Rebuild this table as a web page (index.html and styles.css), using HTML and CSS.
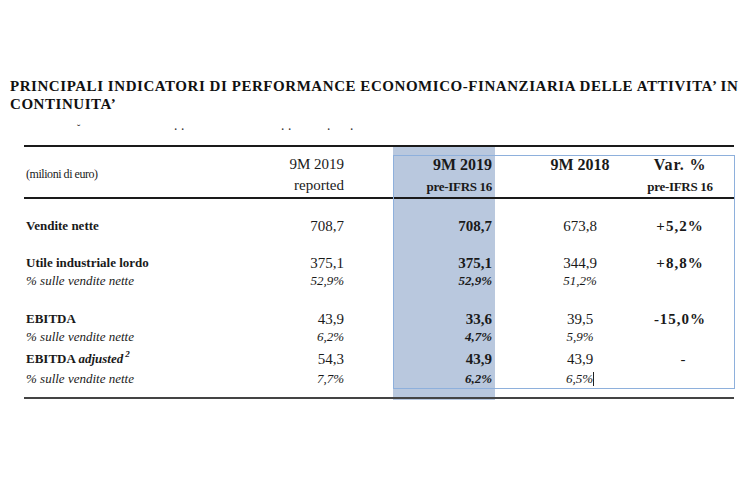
FILE: index.html
```html
<!DOCTYPE html>
<html lang="it">
<head>
<meta charset="utf-8">
<title>Principali indicatori</title>
<link rel="stylesheet" href="styles.css">
</head>
<body>
<div class="page">
  <h1 class="title">PRINCIPALI INDICATORI DI PERFORMANCE ECONOMICO-FINANZIARIA DELLE ATTIVITA’ IN<br>CONTINUITA’</h1>
  <div class="marks"><span class="m m1">˘</span><span class="m m2">·</span><span class="m m3">·</span><span class="m m4">·</span><span class="m m5">·</span><span class="m m6">·</span><span class="m m7">·</span></div>
  <div class="tablewrap">
    <table class="kpi">
      <colgroup>
        <col class="c-label"><col class="c-rep"><col class="c-sp"><col class="c-pre"><col class="c-prev"><col class="c-var">
      </colgroup>
      <thead>
        <tr>
          <th class="label unit">(milioni di euro)</th>
          <th class="rep">9M 2019<br>reported</th>
          <th class="sp"></th>
          <th class="pre"><span class="h1b">9M 2019</span><br><span class="h2b">pre-IFRS 16</span></th>
          <th class="prev"><span class="h1b">9M 2018</span></th>
          <th class="var"><span class="h1b wide">Var. %</span><br><span class="h2b">pre-IFRS 16</span></th>
        </tr>
      </thead>
      <tbody>
        <tr class="g-vendite">
          <td class="label">Vendite nette</td><td class="rep">708,7</td><td class="sp"></td><td class="pre">708,7</td><td class="prev">673,8</td><td class="var">+5,2%</td>
        </tr>
        <tr class="g-utile">
          <td class="label">Utile industriale lordo</td><td class="rep">375,1</td><td class="sp"></td><td class="pre">375,1</td><td class="prev">344,9</td><td class="var">+8,8%</td>
        </tr>
        <tr class="pct">
          <td class="label">% sulle vendite nette</td><td class="rep">52,9%</td><td class="sp"></td><td class="pre">52,9%</td><td class="prev">51,2%</td><td class="var"></td>
        </tr>
        <tr class="g-ebitda">
          <td class="label">EBITDA</td><td class="rep">43,9</td><td class="sp"></td><td class="pre">33,6</td><td class="prev">39,5</td><td class="var">-15,0%</td>
        </tr>
        <tr class="pct">
          <td class="label">% sulle vendite nette</td><td class="rep">6,2%</td><td class="sp"></td><td class="pre">4,7%</td><td class="prev">5,9%</td><td class="var"></td>
        </tr>
        <tr class="g-adj">
          <td class="label">EBITDA <i class="adj">adjusted</i><sup class="note">2</sup></td><td class="rep">54,3</td><td class="sp"></td><td class="pre">43,9</td><td class="prev">43,9</td><td class="var dash">-</td>
        </tr>
        <tr class="pct last">
          <td class="label">% sulle vendite nette</td><td class="rep">7,7%</td><td class="sp"></td><td class="pre">6,2%</td><td class="prev">6,5%<span class="caret"></span></td><td class="var"></td>
        </tr>
        <tr class="tail">
          <td></td><td></td><td></td><td class="pre"></td><td></td><td></td>
        </tr>
      </tbody>
    </table>
    <div class="hl-box"></div>
  </div>
</div>
</body>
</html>
```

FILE: styles.css
```css
html, body {
  margin: 0;
  padding: 0;
  background: #ffffff;
}

body {
  font-family: "Liberation Serif", "Times New Roman", serif;
  color: #1a1a1a;
  width: 750px;
  height: 500px;
  overflow: hidden;
}

.page {
  padding-top: 77px;
}

.title {
  margin: 0 0 0 10px;
  font-size: 15px;
  line-height: 18px;
  font-weight: bold;
  letter-spacing: 0.55px;
  white-space: nowrap;
  color: #111;
}

.marks {
  height: 10px;
  margin-top: 12px;
  position: relative;
  font-size: 10px;
  line-height: 10px;
  color: #333;
}

.m {
  position: absolute;
  top: 0;
  font-weight: bold;
}
.m1 { left: 77px; top: -1px; }
.m2 { left: 174px; }
.m3 { left: 181px; }
.m4 { left: 281px; }
.m5 { left: 288px; }
.m6 { left: 327px; }
.m7 { left: 350px; }

.tablewrap {
  position: relative;
  margin: 10px 0 0 24px;
  width: 710px;
}

.kpi {
  width: 710px;
  table-layout: fixed;
  border-collapse: separate;
  border-spacing: 0;
  border-top: 2px solid #1a1a1a;
}

.c-label { width: 246px; }
.c-rep { width: 80px; }
.c-sp { width: 43px; }
.c-pre { width: 102px; }
.c-prev { width: 135px; }
.c-var { width: 104px; }

.kpi th, .kpi td {
  padding: 0;
  white-space: nowrap;
  font-weight: normal;
}

.kpi thead th {
  height: 50px;
  box-sizing: border-box;
  padding-top: 7px;
  vertical-align: top;
  line-height: 21px;
  font-size: 15px;
  border-bottom: 2px solid #1a1a1a;
}

.kpi thead th.unit {
  vertical-align: middle;
  padding-top: 4px;
  font-size: 12px;
  letter-spacing: -0.45px;
  text-align: left;
  padding-left: 2px;
}

.h1b {
  font-weight: bold;
  font-size: 16px;
}
.h1b.wide { letter-spacing: 0.8px; }
.h2b {
  font-weight: bold;
  font-size: 13px;
  letter-spacing: -0.3px;
}

.kpi td {
  line-height: 18px;
  font-size: 15px;
  vertical-align: bottom;
}

.kpi .label {
  text-align: left;
  padding-left: 2px;
}

.kpi .rep {
  text-align: right;
  padding-right: 6px;
}

.kpi .pre {
  text-align: right;
  padding-right: 3px;
  background: #b9c8de;
  font-weight: bold;
}

.kpi .prev {
  text-align: center;
  padding-left: 35px;
}

.kpi .var {
  text-align: center;
  padding-right: 4px;
  font-weight: bold;
  letter-spacing: 1px;
}
.kpi .var.dash {
  font-weight: normal;
  letter-spacing: 0;
  padding-left: 6px;
}

.kpi td.label {
  font-size: 13px;
  font-weight: bold;
}

.adj { font-weight: bold; }
.note {
  font-size: 9px;
  line-height: 0;
  vertical-align: 6px;
  font-style: italic;
  margin-left: 2px;
}

.kpi .g-vendite td { padding-top: 18px; }
.kpi .g-utile td { padding-top: 19px; }
.kpi .g-ebitda td { padding-top: 20px; }
.kpi .g-adj td { padding-top: 3px; line-height: 20px; }

.kpi .pct td {
  font-style: italic;
  font-size: 13px;
}
.kpi .pct td.label,
.kpi .pct td.rep,
.kpi .pct td.prev { font-weight: normal; }

.kpi .pct.last td {
  line-height: 20px;
  padding-bottom: 8px;
  border-bottom: 2px solid #444;
}

.kpi .tail td {
  height: 1px;
  line-height: 1px;
  font-size: 1px;
}

.caret {
  display: inline-block;
  width: 1px;
  height: 14px;
  background: #222;
  vertical-align: -3px;
}

.hl-box {
  position: absolute;
  left: 369px;
  top: 10px;
  width: 340px;
  height: 232px;
  border: 1.5px solid #8eb0dc;
  pointer-events: none;
}
```
